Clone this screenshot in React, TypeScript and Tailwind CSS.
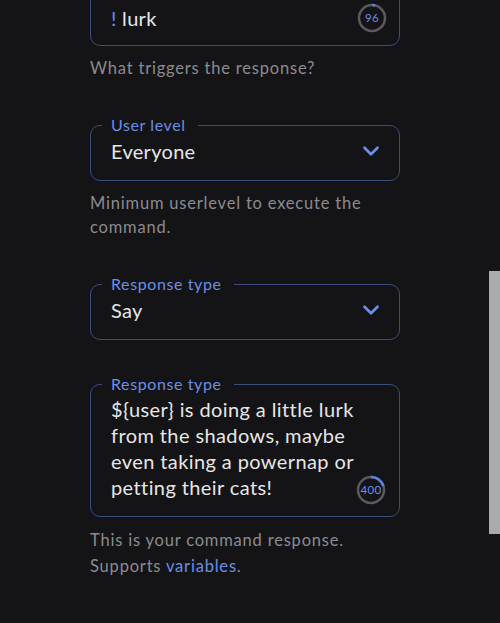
import { ChevronDown } from 'lucide-react';

const font = { fontFamily: 'Lato, "Noto Sans", sans-serif' };

function Counter({ value, progress }: { value: string; progress: number }) {
  const r = 13;
  const c = 2 * Math.PI * r;
  return (
    <div className="relative h-[32px] w-[32px] shrink-0">
      <svg viewBox="0 0 32 32" className="h-full w-full -rotate-90">
        <circle cx="16" cy="16" r={r} fill="none" stroke="#5a5a5e" strokeWidth="2.5" />
        <circle
          cx="16"
          cy="16"
          r={r}
          fill="none"
          stroke="#5b82e0"
          strokeWidth="2.5"
          strokeDasharray={`${c * progress} ${c}`}
        />
      </svg>
      <span className="absolute inset-0 flex items-center justify-center text-[11.5px] tracking-wide text-[#6b8ee6]">
        {value}
      </span>
    </div>
  );
}

function Field({ label, children }: { label: string; children: React.ReactNode }) {
  return (
    <fieldset className="relative rounded-[10px] border border-[#3a4d7c] pl-5 pr-[11px] pt-[4px] pb-[16px]">
      <legend className="-ml-[9px] pl-[9px] pr-3 text-[16px] leading-[18px] tracking-[0.6px] text-[#6b8ee6]">
        {label}
      </legend>
      {children}
    </fieldset>
  );
}

function Helper({ children, tall }: { children: React.ReactNode; tall?: boolean }) {
  return (
    <p
      className={
        tall
          ? 'mt-[10px] text-[16.5px] leading-[26px] tracking-[0.8px] text-[#8b8b90]'
          : 'mt-[10px] text-[16.5px] leading-[24px] tracking-[0.8px] text-[#8b8b90]'
      }
    >
      {children}
    </p>
  );
}

export default function App() {
  return (
    <div className="relative min-h-screen overflow-hidden bg-[#141417]" style={font}>
      <div className="-mt-[19px] ml-[90px] flex w-[310px] flex-col gap-[36px]">
        <div>
          <Field label="Command">
            <div className="mt-[2px] -mb-[2px] flex items-center justify-between">
              <span className="text-[20px] leading-[26px] tracking-[0.3px] text-[#e6e6e6]">
                <span className="text-[#6b8ee6]">!</span> lurk
              </span>
              <div className="-my-[3px]">
                <Counter value="96" progress={0.04} />
              </div>
            </div>
          </Field>
          <Helper>What triggers the response?</Helper>
        </div>

        <div>
          <Field label="User level">
            <div className="flex items-center justify-between">
              <span className="text-[20px] leading-[26px] tracking-[0.3px] text-[#e6e6e6]">Everyone</span>
              <ChevronDown className="mr-[4px] h-[26px] w-[26px] text-[#6b8ee6]" strokeWidth={2.5} />
            </div>
          </Field>
          <Helper>Minimum userlevel to execute the command.</Helper>
        </div>

        <div className="-mb-[1px]">
          <Field label="Response type">
            <div className="flex items-center justify-between">
              <span className="text-[20px] leading-[26px] tracking-[0.3px] text-[#e6e6e6]">Say</span>
              <ChevronDown className="mr-[4px] h-[26px] w-[26px] text-[#6b8ee6]" strokeWidth={2.5} />
            </div>
          </Field>
        </div>

        <div>
          <Field label="Response type">
            <p className="-mt-[1px] w-[250px] text-[20px] leading-[26px] tracking-[0.4px] text-[#e6e6e6]">
              {'${user}'} is doing a little lurk from the shadows, maybe even taking a powernap or petting their cats!
            </p>
            <div className="absolute bottom-[10px] right-[12px]">
              <Counter value="400" progress={0.2} />
            </div>
          </Field>
          <Helper tall>
            This is your command response. Supports <span className="text-[#6b8ee6]">variables</span>.
          </Helper>
        </div>
      </div>

      <div className="absolute right-0 top-[271px] h-[263px] w-[11px] bg-[#a9aaae]" />
    </div>
  );
}
